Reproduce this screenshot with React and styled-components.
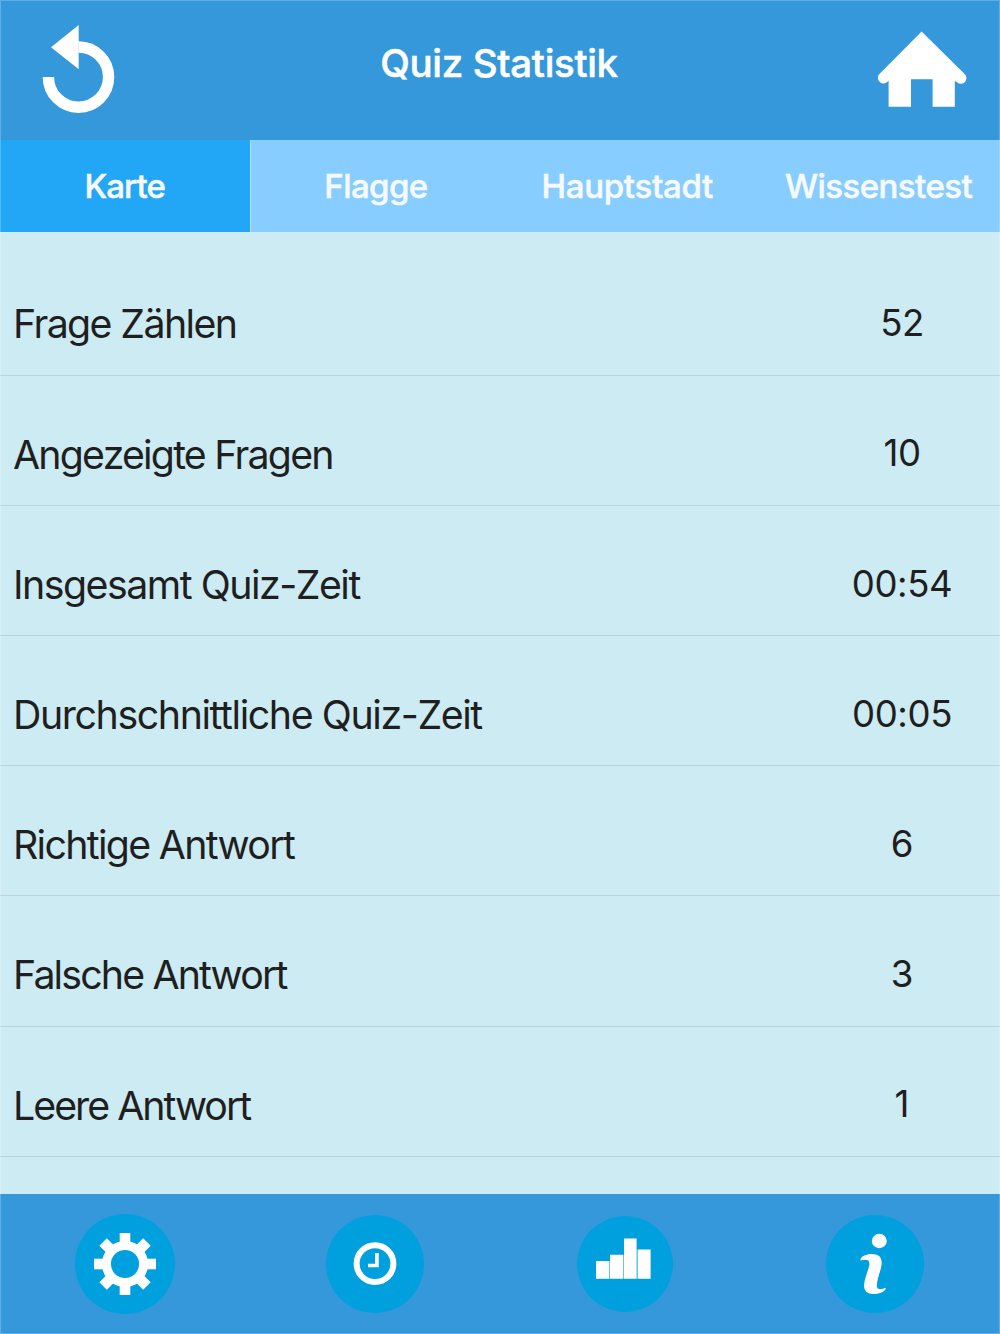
import React from "react";
import styled, { createGlobalStyle } from "styled-components";

const GlobalStyle = createGlobalStyle`
  * { box-sizing: border-box; }
  body { margin: 0; background: #cdebf3; }
`;

const Screen = styled.div`
  width: 1000px;
  height: 1334px;
  display: flex;
  flex-direction: column;
  overflow: hidden;
  position: relative;
  background: #cdebf3;
  font-family: Inter, "Liberation Sans", sans-serif;
  &::after {
    content: "";
    position: absolute;
    inset: 0;
    border: 1px solid rgba(255, 255, 255, 0.22);
    pointer-events: none;
  }
`;

const Header = styled.header`
  flex: none;
  height: 140px;
  padding: 25px 33px 0 42px;
  display: flex;
  justify-content: space-between;
  align-items: flex-start;
  background: #3498db;
`;

const IconButton = styled.button`
  width: ${(p) => p.$width}px;
  height: 89px;
  padding: 0;
  border: 0;
  background: none;
  color: #fff;
  svg { display: block; }
`;

const Title = styled.h1`
  margin: 15px 0 0 5px;
  font-size: 38.5px;
  line-height: 46px;
  font-weight: 500;
  -webkit-text-stroke: 0.5px currentColor;
  letter-spacing: ${(p) => p.$track}px;
  color: #fff;
  white-space: nowrap;
`;

const Tabs = styled.nav`
  flex: none;
  height: 91.5px;
  display: grid;
  grid-template-columns: repeat(4, 251.3px);
  overflow: hidden;
  background: #87cdff;
`;

const Tab = styled.button`
  padding: 0 1px 0 0;
  border: 0;
  border-right: 1px solid ${(p) => (p.$active ? "#b5e0ff" : "transparent")};
  background: ${(p) => (p.$active ? "#22a7f7" : "transparent")};
  color: #f7fafd;
  font-family: inherit;
  font-size: 33px;
  font-weight: 500;
  -webkit-text-stroke: 0.5px currentColor;
  letter-spacing: ${(p) => p.$track}px;
`;

const List = styled.main`
  flex: 1;
  min-height: 0;
  padding-top: 13.9px;
  overflow: hidden;
`;

const Row = styled.div`
  height: 130.2px;
  padding: 29px 0 0 13px;
  display: flex;
  justify-content: space-between;
  align-items: center;
  border-bottom: 1px solid #bdd3dc;
  color: #1f1f1f;
`;

const Label = styled.span`
  margin-top: -1.2px;
  font-size: 39.3px;
  letter-spacing: ${(p) => p.$track}px;
  white-space: nowrap;
`;

const Value = styled.span`
  width: 196px;
  margin-top: -2.4px;
  text-align: center;
  font-size: 36.6px;
  letter-spacing: ${(p) => p.$track}px;
`;

const Footer = styled.footer`
  flex: none;
  height: 140.5px;
  display: grid;
  grid-template-columns: repeat(4, 1fr);
  place-items: center;
  background: #3498db;
`;

const RoundButton = styled.button`
  width: ${(p) => p.$size}px;
  height: ${(p) => p.$size}px;
  padding: 0;
  border: 0;
  border-radius: 50%;
  display: grid;
  place-items: center;
  background: #00a0de;
  color: #fff;
  svg { display: block; }
`;

const ReplayIcon = () => (
  <svg width="73" height="89" viewBox="42 25 73 89">
    <path d="M48.4 77A30.1 30.1 0 1 0 78.4 47" fill="none" stroke="currentColor" strokeWidth="11.4" />
    <path d="M78.7 25V69.2L51 47.2Z" fill="currentColor" />
  </svg>
);

const HomeIcon = () => (
  <svg width="89" height="89" viewBox="878 25 89 89">
    <path
      fill="currentColor"
      d="M921.6 31.4L964.4 73.8A5.5 5.5 0 0 1 957.3 82.4Q955.5 81.8 954.8 80.6V106.8H932.6V79.2H911V106.8H888.6V80.6Q887.8 81.8 886 82.8A5.6 5.6 0 0 1 879.4 74Z"
    />
  </svg>
);

const GearIcon = () => (
  <svg width="64" height="64" viewBox="-32 -32 64 64">
    <circle r="18.6" fill="none" stroke="currentColor" strokeWidth="9" />
    {[0, 45, 90, 135, 180, 225, 270, 315].map((a) => (
      <rect key={a} x="-5.3" y="-31" width="10.6" height="11" fill="currentColor" transform={`rotate(${a})`} />
    ))}
  </svg>
);

const ClockIcon = () => (
  <svg width="44" height="44" viewBox="-22 -21.7 44 44">
    <circle r="18.4" fill="none" stroke="currentColor" strokeWidth="6" />
    <path d="M1.9 -10.8V1.8H-7" fill="none" stroke="currentColor" strokeWidth="3.7" />
  </svg>
);

const ChartIcon = () => (
  <svg width="96" height="96" viewBox="577 1216 96 96">
    <g fill="currentColor">
      <path d="M596 1261h13v17.7h-13zM610 1254.7h13v24h-13zM624 1238.4h12.6v40.3H624zM638 1249.4h12.6v29.3H638z" />
      <path d="M609 1261h1v17.7h-1zM623 1254.7h1v24h-1zM636.6 1249.4h1.4v29.3h-1.4z" opacity="0.4" />
    </g>
  </svg>
);

const InfoIcon = () => (
  <svg width="98" height="98" viewBox="825.9 1214.6 98 98">
    <ellipse cx="879.2" cy="1240.6" rx="7.5" ry="7.2" fill="currentColor" />
    <path
      fill="currentColor"
      d="M860.3 1260C860.2 1256.2 866 1253.7 871.5 1253.7C879 1253.7 882.4 1257.2 881.4 1264.5C880.5 1271 876.7 1279.5 876.7 1285C876.7 1289.5 880.5 1289.2 885.7 1287.3C886.2 1290.5 880 1293.7 873.5 1293.7C866.5 1293.7 863.5 1289.8 864 1284C864.5 1277.5 868.9 1268.5 869.3 1263.5C869.6 1258.5 865 1259 860.3 1260Z"
    />
  </svg>
);

const tabs = [
  { name: "Karte", track: -0.9 },
  { name: "Flagge", track: -0.6 },
  { name: "Hauptstadt", track: -0.3 },
  { name: "Wissenstest", track: -0.55 },
];

const stats = [
  { label: "Frage Zählen", value: "52", track: -1.6, valueTrack: -0.5 },
  { label: "Angezeigte Fragen", value: "10", track: -1.78, valueTrack: -0.5 },
  { label: "Insgesamt Quiz-Zeit", value: "00:54", track: -1.5, valueTrack: -0.4 },
  { label: "Durchschnittliche Quiz-Zeit", value: "00:05", track: -1.4, valueTrack: -0.4 },
  { label: "Richtige Antwort", value: "6", track: -1.68, valueTrack: 0 },
  { label: "Falsche Antwort", value: "3", track: -1.85, valueTrack: 0 },
  { label: "Leere Antwort", value: "1", track: -2, valueTrack: 0 },
];

const actions = [
  { name: "Einstellungen", size: 100, Icon: GearIcon },
  { name: "Zeit", size: 98, Icon: ClockIcon },
  { name: "Statistik", size: 96, Icon: ChartIcon },
  { name: "Info", size: 98, Icon: InfoIcon },
];

export default function App() {
  return (
    <Screen>
      <GlobalStyle />
      <Header>
        <IconButton $width={73} aria-label="Zurück"><ReplayIcon /></IconButton>
        <Title $track={-0.33}>Quiz Statistik</Title>
        <IconButton $width={89} aria-label="Startseite"><HomeIcon /></IconButton>
      </Header>
      <Tabs>
        {tabs.map((t, i) => (
          <Tab key={t.name} $active={i === 0} $track={t.track}>{t.name}</Tab>
        ))}
      </Tabs>
      <List>
        {stats.map((s) => (
          <Row key={s.label}>
            <Label $track={s.track}>{s.label}</Label>
            <Value $track={s.valueTrack}>{s.value}</Value>
          </Row>
        ))}
      </List>
      <Footer>
        {actions.map(({ name, size, Icon }) => (
          <RoundButton key={name} $size={size} aria-label={name}><Icon /></RoundButton>
        ))}
      </Footer>
    </Screen>
  );
}
